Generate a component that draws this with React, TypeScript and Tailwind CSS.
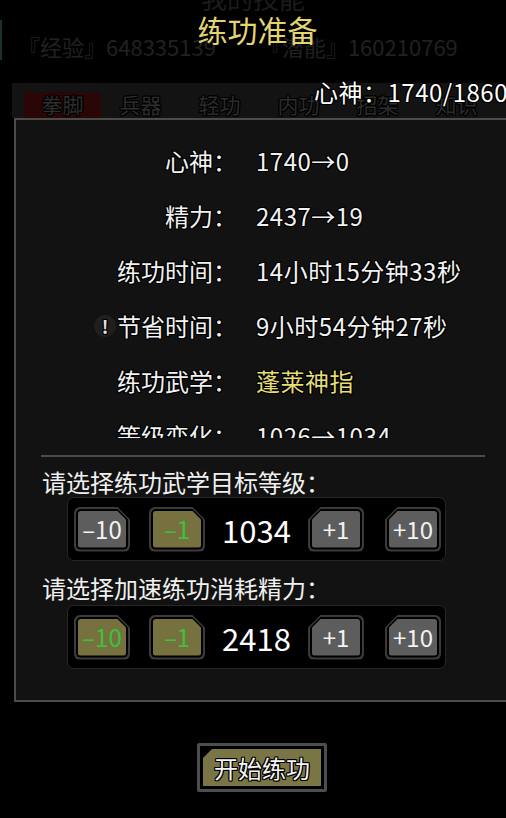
import React from 'react';

const CUT_R_13 = '[clip-path:polygon(0_0,calc(100%-13px)_0,100%_13px,100%_100%,0_100%)]';
const CUT_R_11 = '[clip-path:polygon(0_0,calc(100%-11px)_0,100%_11px,100%_100%,0_100%)]';
const CUT_R_9 = '[clip-path:polygon(0_0,calc(100%-9px)_0,100%_9px,100%_100%,0_100%)]';
const CUT_L_13 = '[clip-path:polygon(13px_0,100%_0,100%_100%,0_100%,0_13px)]';
const CUT_L_11 = '[clip-path:polygon(11px_0,100%_0,100%_100%,0_100%,0_11px)]';
const CUT_L_9 = '[clip-path:polygon(9px_0,100%_0,100%_100%,0_100%,0_9px)]';

const OUTLINE =
  '[text-shadow:1px_0_0_#000,-1px_0_0_#000,0_1px_0_#000,0_-1px_0_#000,1px_1px_0_#000,-1px_-1px_0_#000,1px_-1px_0_#000,-1px_1px_0_#000]';

function StepButton({ label, cut, active }: { label: string; cut: 'left' | 'right'; active?: boolean }) {
  const right = cut === 'right';
  return (
    <div className={`h-[45px] w-[56px] shrink-0 rounded-[6px] bg-[#3b3b3b] p-[2px] ${right ? CUT_R_13 : CUT_L_13}`}>
      <div className={`h-full w-full rounded-[5px] bg-black p-[2px] ${right ? CUT_R_11 : CUT_L_11}`}>
        <div
          className={`flex h-full w-full items-center justify-center rounded-[3px] text-[24px] leading-none ${
            active ? 'bg-[#76713f] text-[#3cc23c]' : 'bg-[#5d5d5d] text-[#f2f2f2]'
          } ${right ? CUT_R_9 : CUT_L_9}`}
        >
          {label}
        </div>
      </div>
    </div>
  );
}

function Stepper({ value, active }: { value: string; active: string[] }) {
  return (
    <div className="ml-[51px] flex h-[64px] w-[379px] items-center rounded-[7px] border border-[#262626] bg-black pl-[6px]">
      <StepButton label="–10" cut="right" active={active.includes('-10')} />
      <div className="w-[19px]" />
      <StepButton label="–1" cut="right" active={active.includes('-1')} />
      <div className="w-[103px] text-center text-[31px] leading-none text-white">{value}</div>
      <StepButton label="+1" cut="left" />
      <div className="w-[21px]" />
      <StepButton label="+10" cut="left" />
    </div>
  );
}

const ROWS: { label: string; value: string; highlight?: boolean; warn?: boolean }[] = [
  { label: '心神：', value: '1740→0' },
  { label: '精力：', value: '2437→19' },
  { label: '练功时间：', value: '14小时15分钟33秒' },
  { label: '节省时间：', value: '9小时54分钟27秒', warn: true },
  { label: '练功武学：', value: '蓬莱神指', highlight: true },
  { label: '等级变化：', value: '1026→1034' },
];

const TABS = ['兵器', '轻功', '内功', '招架', '知识'];

export default function App() {
  return (
    <div className="relative h-[818px] w-[506px] overflow-hidden bg-black font-['Noto_Sans_CJK_SC',sans-serif] text-white">
      {/* dimmed page behind the dialog */}
      <div className="absolute left-0 top-[20px] h-[40px] w-[2px] bg-[#173324]" />
      <div className="-mt-[16px] h-[28px] text-center text-[26px] leading-[28px] text-[#1c1c1c]">我的技能</div>
      <div className="mt-[20px] flex h-[28px] items-center pl-[18px] text-[22px] leading-none text-[#212121]">
        <span>『经验』648335139</span>
        <span className="ml-[44px]">『潜能』160210769</span>
      </div>
      <div className="ml-[12px] mt-[23px] flex h-[35px] items-end bg-[#131313] pl-[12px]">
        <div className={`flex h-[26px] w-[77px] items-center justify-center rounded-t-[3px] bg-[#2a0606] text-[21px] text-[#2e2e2e] ${OUTLINE}`}>
          拳脚
        </div>
        {TABS.map((t) => (
          <div key={t} className={`flex h-[26px] w-[79px] items-center justify-center text-[21px] text-[#2c2c2c] ${OUTLINE}`}>
            {t}
          </div>
        ))}
      </div>

      {/* dialog */}
      <div className="ml-[14px] h-[584px] w-[520px] border-2 border-[#4b4b4b] bg-[#121212]">
        <div className="h-[318px] overflow-hidden pt-[13px]">
          {ROWS.map((r) => (
            <div key={r.label} className="flex h-[55px] items-center text-[24px] leading-none">
              <div className={`flex w-[221px] items-center justify-end text-[#f2f2f2] ${OUTLINE}`}>
                {r.warn && (
                  <span className="mr-[1px] flex h-[22px] w-[22px] items-center justify-center rounded-full bg-[#1f1f1f] text-[18px] font-bold leading-none text-[#e0e0e0]">
                    !
                  </span>
                )}
                <span>{r.label}</span>
              </div>
              <div className={`ml-[19px] tracking-[0.5px] ${r.highlight ? 'text-[#e6de76]' : 'text-[#f2f2f2]'} ${OUTLINE}`}>
                {r.value}
              </div>
            </div>
          ))}
        </div>
        <div className="ml-[25px] mt-[17px] h-[2px] w-[444px] bg-[#4a4a4a]" />
        <div className="ml-[26px] mt-[10px] h-[30px] text-[24px] leading-[30px] text-[#f0f0f0]">请选择练功武学目标等级：</div>
        <Stepper value="1034" active={['-1']} />
        <div className="ml-[26px] mt-[12px] h-[30px] text-[24px] leading-[30px] text-[#f0f0f0]">请选择加速练功消耗精力：</div>
        <div className="mt-[2px]">
          <Stepper value="2418" active={['-10', '-1']} />
        </div>
      </div>

      {/* start button */}
      <div className="ml-[197px] mt-[41px] h-[49px] w-[130px] rounded-[2px] bg-[#4d4d4d] p-[3px]">
        <div className="h-full w-full bg-black p-[3px]">
          <div
            className={`flex h-full w-full items-center justify-center bg-[#7a7544] text-[24px] leading-none text-[#f4f4f4] [clip-path:polygon(9px_0,100%_0,100%_100%,0_100%,0_9px)] ${OUTLINE}`}
          >
            开始练功
          </div>
        </div>
      </div>

      {/* overlays */}
      <div className="absolute left-0 right-0 top-[11px] pl-[9px] text-center text-[30px] leading-[36px] text-[#e3d472]">练功准备</div>
      <div className={`absolute left-[314px] top-[77px] whitespace-nowrap text-[24px] leading-[30px] tracking-[0.5px] text-white ${OUTLINE}`}>
        心神：1740/1860
      </div>
    </div>
  );
}
